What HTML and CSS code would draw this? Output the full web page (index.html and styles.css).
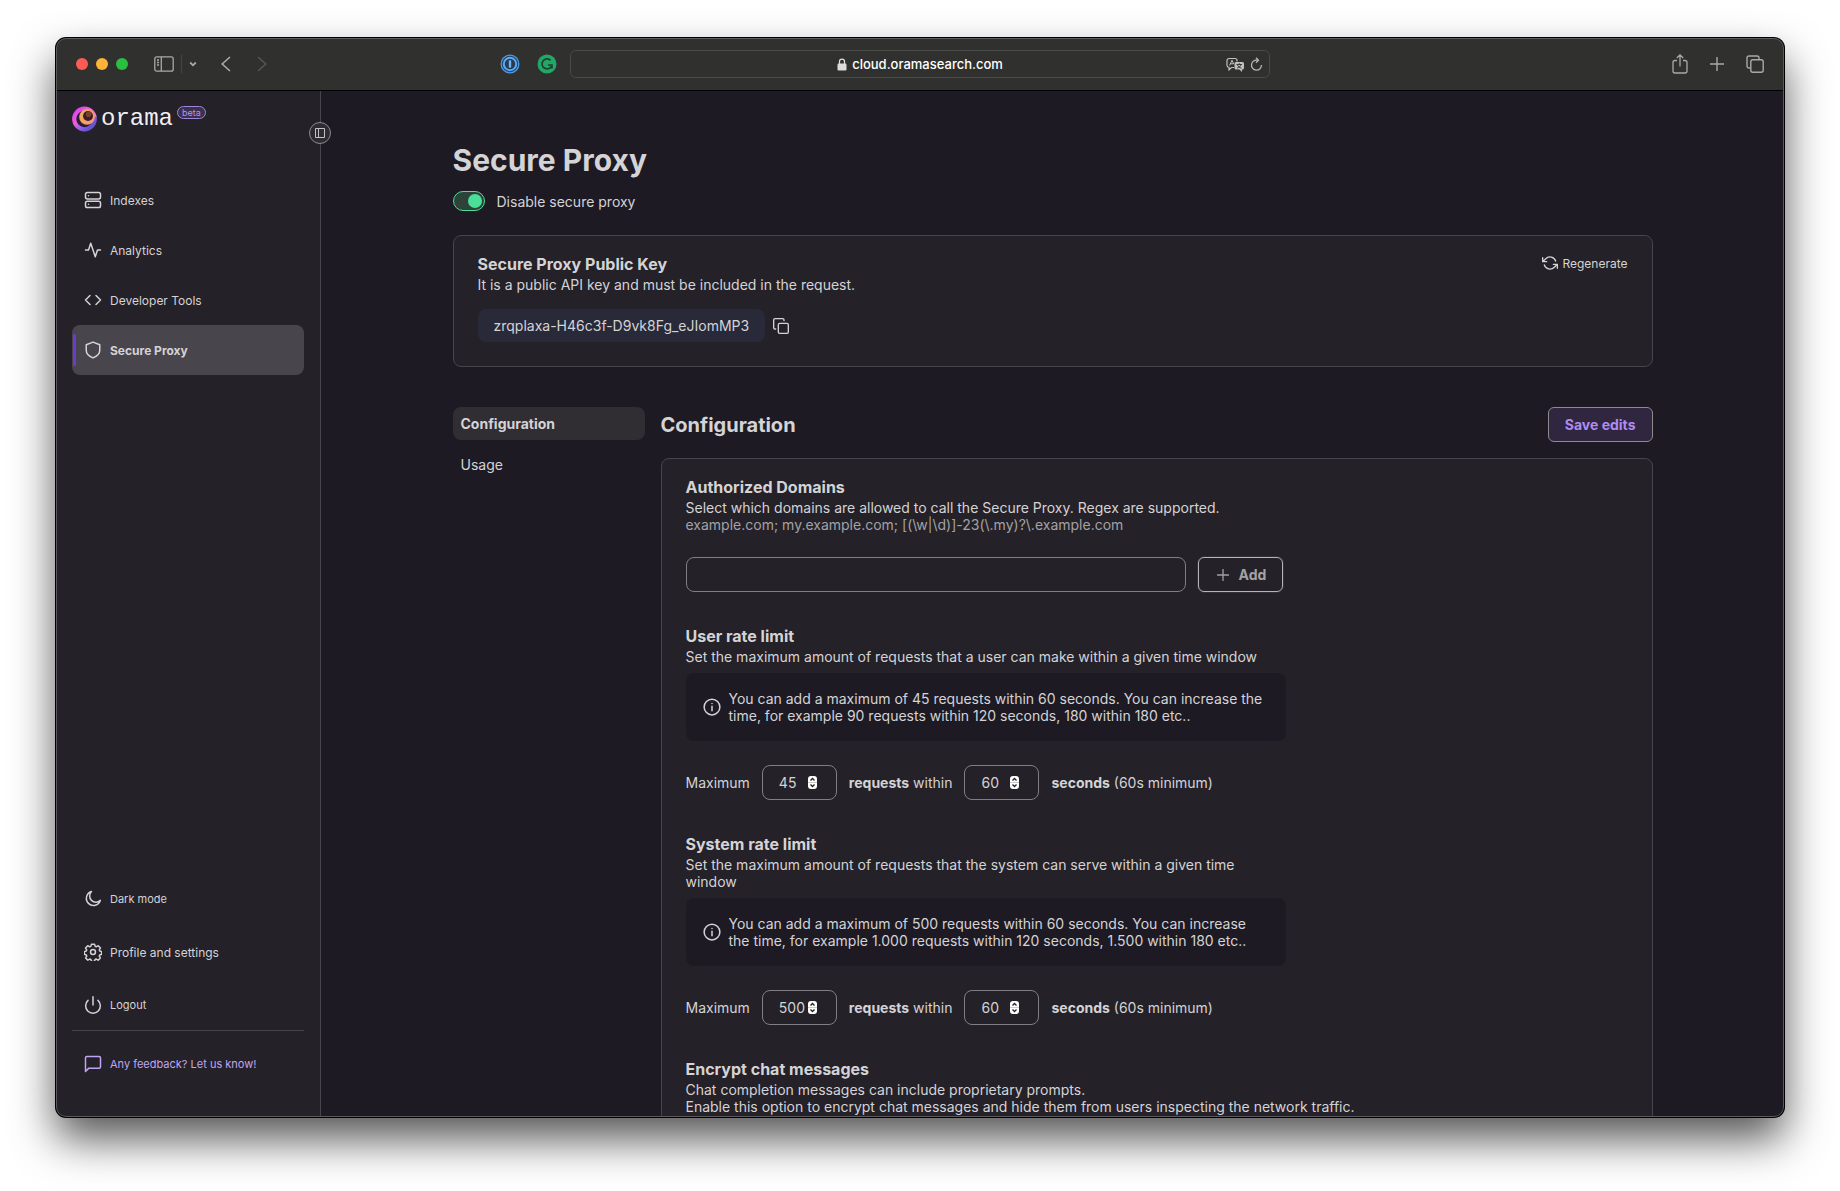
FILE: index.html
```html
<!DOCTYPE html>
<html lang="en">
<head>
<meta charset="utf-8">
<title>Orama Cloud - Secure Proxy</title>
<link rel="stylesheet" href="styles.css">
</head>
<body>
<div class="window">
  <header class="toolbar">
    <div class="toolbar-side">
      <div class="toolbar-group">
        <div class="lights"><span class="light red"></span><span class="light yellow"></span><span class="light green"></span></div>
        <button class="tool" aria-label="Sidebar"><svg width="20" height="16" viewBox="0 0 20 16" stroke-width="1.300"><rect x=".8" y=".8" width="18.4" height="14.4" rx="2"/><path d="M7.3 1v14M3 4h2M3 6.500h2M3 9h2"/></svg></button>
        <span class="tool-divider"></span>
        <button class="tool menu" aria-label="Tab groups"><svg width="8" height="6" viewBox="0 0 8 6" stroke-width="1.800"><path d="M1.200 1.500 4 4.300 6.800 1.500"/></svg></button>
        <button class="tool back" aria-label="Back"><svg width="10" height="16" viewBox="0 0 10 16" stroke-width="1.600"><path d="M9 1 1.200 8 9 15"/></svg></button>
        <button class="tool dim" aria-label="Forward"><svg width="10" height="16" viewBox="0 0 10 16" stroke-width="1.600"><path d="M1 1 8.800 8 1 15"/></svg></button>
      </div>
      <div class="extensions">
        <svg width="20" height="20" viewBox="0 0 20 20"><circle cx="10" cy="10" r="9.500" fill="#4a9be8"/><circle cx="10" cy="10" r="8.200" fill="#25405c"/><circle cx="10" cy="10" r="7.200" fill="#5aa9f2"/><circle cx="10" cy="10" r="5.200" fill="#263b50"/><rect x="8.800" y="6.300" width="2.400" height="7.400" rx=".6" fill="#6db4f6"/></svg>
        <svg width="20" height="20" viewBox="0 0 20 20"><circle cx="10" cy="10" r="9.500" fill="#21a866"/><path d="M13.600 6.400A5 5 0 1 0 14.800 11.500M11 11h4v3.500" fill="none" stroke="#22402f" stroke-width="1.700"/></svg>
      </div>
    </div>
    <div class="address">
      <span class="address-text"><svg width="10" height="13" viewBox="0 0 10 13"><path d="M2.500 6V3.600a2.500 2.500 0 0 1 5 0V6" fill="none" stroke="#dcdcdc" stroke-width="1.300"/><rect x=".5" y="5.500" width="9" height="7" rx="1.200" fill="#dcdcdc"/></svg>cloud.oramasearch.com</span>
      <span class="address-tools">
        <svg width="19" height="15" viewBox="0 0 19 15"><path d="M8 10.500H5.500L3 12.800v-2.400A2 2 0 0 1 1 8.500v-5a2 2 0 0 1 2-2h6a2 2 0 0 1 2 2v1" fill="none" stroke="#c0c0be" stroke-width="1.200"/><path d="M3.600 8.500 6 3.200l1.800 4M4.500 6.800h2.800" fill="none" stroke="#c0c0be"/><path d="M10 5h6.500A1.500 1.500 0 0 1 18 6.500v4.500a1.500 1.500 0 0 1-1.500 1.500H16V15l-2.500-2.500H10A1.500 1.500 0 0 1 8.500 11V6.500A1.500 1.500 0 0 1 10 5z" fill="#c0c0be"/><path d="M10.500 7.500h5.500M13.200 6.200v1.300M15 7.500c-.6 2-2 3-4 3.700M11.500 8c.7 1.600 2 2.600 4 3.200" fill="none" stroke="#30302e" stroke-width=".9"/></svg>
        <svg width="13" height="15" viewBox="0 0 13 15"><path d="M7.500 3.200A5 5 0 1 0 11.500 8M6 .8l2.500 2.500L6 5.800" fill="none" stroke="#b5b5b3" stroke-width="1.300"/></svg>
      </span>
    </div>
    <div class="toolbar-end">
      <button class="tool" aria-label="Share"><svg width="16" height="20" viewBox="0 0 16 20" stroke-width="1.300"><path d="M5 6.500H3a2 2 0 0 0-2 2v8.500a2 2 0 0 0 2 2h10a2 2 0 0 0 2-2V8.500a2 2 0 0 0-2-2h-2M8 12.500V1M4.800 4 8 .9 11.200 4"/></svg></button>
      <button class="tool" aria-label="New tab"><svg width="14" height="14" viewBox="0 0 14 14" stroke-width="1.400"><path d="M7 0v14M0 7h14"/></svg></button>
      <button class="tool" aria-label="Tab overview"><svg width="18" height="18" viewBox="0 0 18 18" stroke-width="1.400"><path d="M4.500 13H3a2 2 0 0 1-2-2V3a2 2 0 0 1 2-2h8a2 2 0 0 1 2 2v1.500"/><rect x="4.800" y="4.800" width="12.400" height="12.400" rx="2"/></svg></button>
    </div>
  </header>

  <div class="page">
    <aside class="sidebar">
      <button class="collapse" aria-label="Collapse sidebar"><svg width="10" height="10" viewBox="0 0 10 10"><path d="M.5.500h9v9h-9zM3.500.500v9"/></svg></button>
      <a class="brand" href="#">
        <svg width="25" height="26" viewBox="0 0 25 26">
          <defs>
            <linearGradient id="ring" x1=".1" y1=".1" x2=".8" y2=".9"><stop offset="0" stop-color="#e046f2"/><stop offset=".4" stop-color="#e860d0"/><stop offset=".7" stop-color="#9a60ee"/><stop offset="1" stop-color="#6452d0"/></linearGradient>
            <linearGradient id="core" x1="0" y1="0" x2="1" y2="1"><stop offset="0" stop-color="#f3b04e"/><stop offset="1" stop-color="#f9937c"/></linearGradient>
            <linearGradient id="top" x1="0" y1="0" x2="1" y2="1"><stop offset="0" stop-color="#f06bd0" stop-opacity="0"/><stop offset="1" stop-color="#fa7fa0"/></linearGradient>
          </defs>
          <circle cx="12.500" cy="13" r="10.300" fill="#2b1a3a" stroke="url(#ring)" stroke-width="4.200"/>
          <path d="M10 3a10.300 10.300 0 0 1 12.500 8" fill="none" stroke="url(#top)" stroke-width="4.200"/>
          <circle cx="15" cy="11" r="7.800" fill="url(#core)"/>
          <circle cx="16" cy="10" r="5" fill="#3a1f2a"/>
          <circle cx="16.600" cy="8.200" r="2.800" fill="#7a4428"/>
        </svg>
        <span class="wordmark">orama</span><span class="beta">beta</span>
      </a>
      <nav class="nav">
        <a class="nav-item" href="#"><svg class="icon" viewBox="0 0 24 24"><rect x="2" y="2" width="20" height="8.500" rx="2.500"/><rect x="2" y="13.500" width="20" height="8.500" rx="2.500"/><path d="M6 6.200h.01M6 17.700h.01"/></svg>Indexes</a>
        <a class="nav-item" href="#"><svg class="icon" viewBox="0 0 24 24"><path d="M22 12h-4l-3 9L9 3l-3 9H2"/></svg>Analytics</a>
        <a class="nav-item" href="#"><svg class="icon" viewBox="0 0 24 24"><path d="m16 18 6-6-6-6M8 6l-6 6 6 6"/></svg>Developer Tools</a>
        <a class="nav-item active" href="#"><svg class="icon" viewBox="0 0 24 24"><path d="M12 22.500c5-2.300 9-5 9-10V5l-9-3.500L3 5v7.500c0 5 4 7.700 9 10z"/></svg>Secure Proxy</a>
      </nav>
      <div class="nav-bottom">
        <button class="nav-item compact"><svg class="icon" viewBox="0 0 24 24"><path d="M10 2A9.500 9.500 0 1 0 21.800 13.800 7.500 7.500 0 0 1 10 2z"/></svg>Dark mode</button>
        <a class="nav-item" href="#"><svg class="icon" viewBox="0 0 24 24"><circle cx="12" cy="12" r="3.300"/><path d="M9.900 1.500h4.200l.8 3 1.400.6 2.700-1.500 3 3-1.600 2.700.6 1.400 2.500.8v3.500l-2.600.9-.6 1.400 1.500 2.700-2.900 2.900-2.600-1.500-1.500.6-.8 2.500H10l-.8-2.500-1.500-.6L5 22.800 2.200 20l1.500-2.700-.6-1.400-2.600-.9v-3.500l2.500-.8.6-1.400L2 6.600l3-3 2.700 1.500 1.400-.6z"/></svg>Profile and settings</a>
        <button class="nav-item compact"><svg class="icon" viewBox="0 0 24 24"><path d="M18.600 5.800a9.800 9.800 0 1 1-13.200 0M12 1v11"/></svg>Logout</button>
      </div>
      <a class="nav-item compact feedback" href="#"><svg class="icon" viewBox="0 0 24 24"><path d="M22 15.500a2 2 0 0 1-2 2H6.500L2 22V4a2 2 0 0 1 2-2h16a2 2 0 0 1 2 2z"/></svg>Any feedback? Let us know!</a>
    </aside>

    <main class="main">
      <div class="content">
        <h1>Secure Proxy</h1>
        <label class="switch-row"><input class="switch" type="checkbox" checked>Disable secure proxy</label>

        <section class="card key-card">
          <div>
            <h3>Secure Proxy Public Key</h3>
            <p>It is a public API key and must be included in the request.</p>
            <div class="key-row">
              <code class="key">zrqplaxa-H46c3f-D9vk8Fg_eJIomMP3</code>
              <button class="plain" aria-label="Copy key"><svg class="icon small" viewBox="0 0 24 24"><rect x="8" y="8" width="15" height="15" rx="2"/><path d="M4 16.500H3A2 2 0 0 1 1 14.500V3a2 2 0 0 1 2-2h11.500a2 2 0 0 1 2 2v1"/></svg></button>
            </div>
          </div>
          <button class="plain regenerate"><svg class="icon small" viewBox="0 0 24 24"><path d="M1 4v6h6M23 20v-6h-6M20.500 9A9 9 0 0 0 5.600 5.600L1 10M23 14l-4.600 4.400A9 9 0 0 1 3.500 15"/></svg>Regenerate</button>
        </section>

        <div class="columns">
          <nav class="tabs">
            <a class="tab selected" href="#">Configuration</a>
            <a class="tab" href="#">Usage</a>
          </nav>
          <div class="panel">
            <div class="panel-head">
              <h2>Configuration</h2>
              <button class="button primary">Save edits</button>
            </div>
            <div class="card settings">
              <section>
                <h3><label for="domain">Authorized Domains</label></h3>
                <p>Select which domains are allowed to call the Secure Proxy. Regex are supported.</p>
                <p class="muted">example.com; my.example.com; [(\w|\d)]-23(\.my)?\.example.com</p>
                <div class="row">
                  <input class="field domain" id="domain" type="text">
                  <button class="button add"><svg class="icon tiny" viewBox="0 0 12 12"><path d="M6 .5v11M.5 6h11"/></svg>Add</button>
                </div>
              </section>
              <section>
                <h3>User rate limit</h3>
                <p>Set the maximum amount of requests that a user can make within a given time window</p>
                <div class="note"><svg class="icon" viewBox="0 0 24 24"><circle cx="12" cy="12" r="10.500"/><path d="M12 11v6M12 7.200h.01"/></svg><p>You can add a maximum of 45 requests within 60 seconds. You can increase the time, for example 90 requests within 120 seconds, 180 within 180 etc..</p></div>
                <div class="row">
                  <label for="user-max">Maximum</label><input class="field number" id="user-max" type="number" value="45">
                  <label for="user-time"><b>requests</b> within</label><input class="field number" id="user-time" type="number" value="60">
                  <span><b>seconds</b> (60s minimum)</span>
                </div>
              </section>
              <section>
                <h3>System rate limit</h3>
                <p>Set the maximum amount of requests that the system can serve within a given time window</p>
                <div class="note"><svg class="icon" viewBox="0 0 24 24"><circle cx="12" cy="12" r="10.500"/><path d="M12 11v6M12 7.200h.01"/></svg><p>You can add a maximum of 500 requests within 60 seconds. You can increase the time, for example 1.000 requests within 120 seconds, 1.500 within 180 etc..</p></div>
                <div class="row">
                  <label for="system-max">Maximum</label><input class="field number" id="system-max" type="number" value="500">
                  <label for="system-time"><b>requests</b> within</label><input class="field number" id="system-time" type="number" value="60">
                  <span><b>seconds</b> (60s minimum)</span>
                </div>
              </section>
              <section>
                <h3>Encrypt chat messages</h3>
                <p class="wide">Chat completion messages can include proprietary prompts.<br>Enable this option to encrypt chat messages and hide them from users inspecting the network traffic.</p>
              </section>
            </div>
          </div>
        </div>
      </div>
    </main>
  </div>
</div>
</body>
</html>
```
FILE: styles.css
```css
* { box-sizing: border-box; }

body {
  margin: 0;
  height: 100vh;
  padding: 38px 56px 74px;
  background: #fff;
  color: #d4d3d6;
  font: 14px/17px Inter, "Liberation Sans", sans-serif;
  overflow: hidden;
}

h1, h2, h3, p { margin: 0; }
a { color: inherit; text-decoration: none; }
button, input { font: inherit; color: inherit; }
button { padding: 0; border: 0; background: none; }
svg { display: block; flex: none; }

/* Browser window */
.window {
  position: relative;
  display: flex;
  flex-direction: column;
  height: 100%;
  border-radius: 10px;
  overflow: hidden;
  background: #1d1a24;
  box-shadow: 0 0 0 1px #000, 0 22px 44px rgba(0, 0, 0, .67);
}
.window::after {
  content: "";
  position: absolute;
  inset: 0;
  border: 1px solid #5c5a5e;
  border-radius: 10px;
  pointer-events: none;
}
.toolbar {
  display: grid;
  grid-template-columns: 1fr 700px 1fr;
  align-items: center;
  flex: none;
  height: 53px;
  padding: 0 20px;
  background: #30302e;
  border-bottom: 1px solid #000;
}
.toolbar-side, .toolbar-group, .extensions, .lights, .toolbar-end { display: flex; align-items: center; }
.toolbar-side { justify-content: space-between; padding-right: 13px; }
.lights { gap: 8px; margin-right: 26px; }
.light { width: 12px; height: 12px; border-radius: 50%; }
.red { background: #ff5b55; }
.yellow { background: #fdb338; }
.green { background: #2ac03f; }
.tool svg { fill: none; stroke: #a9a9a7; }
.tool-divider { width: 1px; height: 18px; margin: 0 7px; background: #454543; }
.menu { margin-right: 24px; }
.back { margin-right: 26px; }
.dim svg { stroke: #555553; }
.extensions { gap: 17px; }
.toolbar-end { justify-content: flex-end; gap: 22px; }
.address {
  display: grid;
  grid-template-columns: 1fr auto 1fr;
  align-items: center;
  height: 28px;
  padding: 0 6px;
  border: 1px solid #4a4a48;
  border-radius: 6px;
  color: #fff;
  font-size: 13px;
  font-weight: 500;
}
.address-text { grid-column: 2; display: flex; align-items: center; gap: 5px; }
.address-tools { display: flex; align-items: center; justify-content: flex-end; gap: 5px; }

/* Sidebar */
.page { display: flex; flex: 1; min-height: 0; }
.sidebar {
  position: relative;
  display: flex;
  flex-direction: column;
  flex: none;
  width: 265px;
  padding: 14px 16px 28px;
  background: #242128;
  border-right: 1px solid #47444b;
  font-size: 12px;
}
.collapse {
  position: absolute;
  top: 31px;
  right: -11px;
  display: grid;
  place-items: center;
  width: 22px;
  height: 22px;
  border: 1px solid #8d8a90;
  border-radius: 50%;
  background: #2e2b33;
}
.collapse svg { fill: none; stroke: #c4c2c6; }
.brand { display: flex; align-items: center; height: 28px; }
.wordmark {
  margin-left: 4px;
  color: #f0eff1;
  font: 24px/24px "Liberation Mono", monospace;
}
.beta {
  align-self: flex-start;
  height: 13px;
  margin: 1px 0 0 4px;
  padding: 0 4px;
  border: 1px solid #a184dc;
  border-radius: 7px;
  background: #3a3050;
  color: #b395f0;
  font-size: 9px;
  line-height: 11px;
}
.nav { margin-top: 42px; }
.nav-item {
  display: flex;
  align-items: center;
  gap: 8px;
  width: 100%;
  height: 50px;
  padding: 0 12px;
  border-radius: 8px;
}
.compact { font-size: 11px; }
.active {
  position: relative;
  background: #48454c;
  font-weight: 700;
}
.active::before {
  content: "";
  position: absolute;
  left: 1px;
  top: 9px;
  bottom: 9px;
  width: 3px;
  border-radius: 2px;
  background: #6a3bcf;
}
.icon {
  width: 18px;
  height: 18px;
  fill: none;
  stroke: currentColor;
  stroke-width: 2;
  stroke-linecap: round;
  stroke-linejoin: round;
}
.small { width: 16px; height: 16px; }
.tiny { width: 12px; height: 12px; stroke-width: 1.3; }
.nav-bottom {
  display: flex;
  flex-direction: column;
  gap: 3px;
  margin-top: auto;
  border-bottom: 1px solid #47444b;
}
.feedback { flex: none; margin-top: 8px; color: #c0a5f2; }

/* Main column */
.main { flex: 1; min-width: 0; padding: 0 32px; overflow: auto; scrollbar-width: none; }
.content { max-width: 1200px; margin: 0 auto; padding: 50px 0; }
h1 { font-size: 30px; line-height: 38px; }
h2 { font-size: 20px; line-height: 24px; }
h3 { margin-bottom: 2px; font-size: 16px; line-height: 20px; }
.switch-row { display: flex; align-items: center; gap: 12px; height: 20px; margin-top: 12px; }
.switch {
  appearance: none;
  display: flex;
  justify-content: flex-end;
  align-items: center;
  width: 32px;
  height: 20px;
  margin: 0;
  padding: 2px;
  border: 1px solid #4ade97;
  border-radius: 10px;
  background: #2d4339;
}
.switch::before {
  content: "";
  width: 14px;
  height: 14px;
  border-radius: 50%;
  background: #4ade97;
}
.switch:not(:checked) { justify-content: flex-start; }
.card {
  padding: 18px 24px 24px;
  background: #242128;
  border: 1px solid #47444b;
  border-radius: 8px;
}
.key-card { display: flex; justify-content: space-between; align-items: flex-start; margin-top: 24px; }
.key-row { display: flex; align-items: center; gap: 8px; margin-top: 16px; }
.key {
  padding: 8px 16px;
  border-radius: 8px;
  background: #292a39;
  font: inherit;
}
.plain { display: flex; align-items: center; gap: 4px; }
.regenerate { height: 18px; font-size: 12px; }

.columns { display: flex; gap: 16px; margin-top: 40px; }
.tabs { display: flex; flex-direction: column; gap: 8px; width: 192px; flex: none; }
.tab { padding: 8px; border-radius: 8px; }
.selected { background: #302d33; font-weight: 700; }
.panel { flex: 1; min-width: 0; }
.panel-head { display: flex; justify-content: space-between; align-items: center; margin-bottom: 16px; }
.button {
  height: 35px;
  padding: 0 16px;
  border: 1px solid #8d8a90;
  border-radius: 6px;
  font-weight: 700;
}
.primary { background: #30263f; color: #ae8cf0; }
.add {
  display: flex;
  align-items: center;
  gap: 8px;
  padding: 0 16px 0 18px;
  border-color: #b5b3b8;
  color: #a3a1a6;
  box-shadow: 0 0 0 1px #333037;
}
.add .icon { margin-right: 2px; }
.settings { display: flex; flex-direction: column; gap: 34px; }
.settings p { max-width: 600px; }
.settings .wide { max-width: none; }
.settings .muted { color: #a3a1a6; }
.row { display: flex; align-items: center; gap: 12px; margin-top: 24px; }
.field {
  height: 35px;
  padding: 0 16px;
  border: 1px solid #817f84;
  border-radius: 8px;
  outline: 0;
  background: transparent;
}
.domain { width: 500px; }
.number { width: 75px; }
.number::-webkit-inner-spin-button {
  appearance: none;
  opacity: 1;
  width: 9px;
  height: 13px;
  margin: 2px 3px 0 0;
  border-radius: 3px;
  background: #fff url("data:image/svg+xml,%3Csvg xmlns='http://www.w3.org/2000/svg' viewBox='0 0 9 13'%3E%3Cpath d='M2.500 4.500l2-2 2 2M2.500 8.500l2 2 2-2' fill='none' stroke='%23222' stroke-width='1.300'/%3E%3Cpath d='M0 6.500h9' stroke='%23ccc'/%3E%3C/svg%3E");
}
.note {
  display: flex;
  align-items: center;
  gap: 8px;
  max-width: 600px;
  margin-top: 8px;
  padding: 17px;
  border-radius: 8px;
  background: #1d1a24;
}
```
